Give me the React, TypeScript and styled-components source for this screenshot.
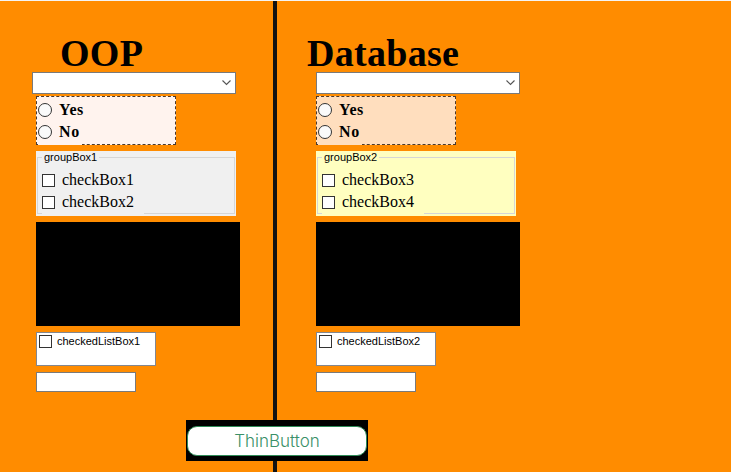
import React from "react";
import styled, { createGlobalStyle } from "styled-components";

const GlobalStyle = createGlobalStyle`
    html, body {
        margin: 0;
        padding: 0;
        background: #ff8c00;
    }
`;

type PanelProps = {
    title: string;
    inset: number;
    titleShift: number;
    comboShift: number;
    radioBg: string;
    groupBg: string;
    groupName: string;
    checks: string[];
    listName: string;
};

const panels: PanelProps[] = [
    {
        title: "OOP",
        inset: 36,
        titleShift: 24,
        comboShift: -4,
        radioBg: "#fff3ee",
        groupBg: "#f0f0f0",
        groupName: "groupBox1",
        checks: ["checkBox1", "checkBox2"],
        listName: "checkedListBox1",
    },
    {
        title: "Database",
        inset: 39,
        titleShift: -9,
        comboShift: 0,
        radioBg: "#ffdebe",
        groupBg: "#ffffc0",
        groupName: "groupBox2",
        checks: ["checkBox3", "checkBox4"],
        listName: "checkedListBox2",
    },
];

const Panel = (p: PanelProps) => {
    return (
        <SColumn $inset={p.inset}>
            <STitle $shift={p.titleShift}>{p.title}</STitle>
            <SCombo $shift={p.comboShift}>
                <svg width="9" height="6" viewBox="0 0 9 6">
                    <polyline
                        points="0.5,0.5 4.5,4.5 8.5,0.5"
                        fill="none"
                        stroke="#555"
                        strokeWidth="1.1"
                    />
                </svg>
            </SCombo>
            <SRadioPanel $bg={p.radioBg}>
                <SRadioRow $bg={p.radioBg}>
                    <SRadio />
                    Yes
                </SRadioRow>
                <SRadioRow $bg={p.radioBg} $cover>
                    <SRadio />
                    No
                </SRadioRow>
            </SRadioPanel>
            <SGroup $bg={p.groupBg}>
                <SFieldset>
                    <SLegend>{p.groupName}</SLegend>
                    {p.checks.map((c, i) => (
                        <SCheckRow key={c} $bg={p.groupBg} $cover={i === 1}>
                            <SCheck />
                            {c}
                        </SCheckRow>
                    ))}
                </SFieldset>
            </SGroup>
            <SScreen />
            <SListBox>
                <SListItem>
                    <SCheck />
                    {p.listName}
                </SListItem>
            </SListBox>
            <STextBox readOnly value="" />
        </SColumn>
    );
};

const App = () => {
    return (
        <>
            <GlobalStyle />
            <SRoot>
                <Panel {...panels[0]} />
                <SDivider />
                <Panel {...panels[1]} />
                <SThinButton>
                    <SThinFace>ThinButton</SThinFace>
                </SThinButton>
            </SRoot>
        </>
    );
};

const SRoot = styled.div`
    position: relative;
    width: 731px;
    height: 472px;
    box-sizing: border-box;
    border-top: 1px solid #f4f4f4;
    background: #ff8c00;
    display: grid;
    grid-template-columns: 273px 4px 1fr;
    overflow: hidden;
`;

const SDivider = styled.div`
    background: #121212;
`;

const SColumn = styled.div<{ $inset: number }>`
    display: flex;
    flex-direction: column;
    align-items: flex-start;
    padding-top: 33px;
    padding-left: ${(p) => p.$inset}px;
`;

const STitle = styled.div<{ $shift: number }>`
    margin-left: ${(p) => p.$shift}px;
    height: 38px;
    font: 700 38px/38px "Liberation Serif", serif;
    letter-spacing: 0.3px;
    color: #000;
    white-space: nowrap;
`;

const SCombo = styled.div<{ $shift: number }>`
    margin-left: ${(p) => p.$shift}px;
    width: 204px;
    height: 22px;
    box-sizing: border-box;
    border: 1px solid #7a7a7a;
    background: #fff;
    display: flex;
    justify-content: flex-end;
    align-items: center;
    padding-right: 4px;
`;

const SRadioPanel = styled.div<{ $bg: string }>`
    margin-top: 2px;
    width: 140px;
    height: 49px;
    box-sizing: border-box;
    border: 1px dashed #4a3a2e;
    background: ${(p) => p.$bg};
    display: flex;
    flex-direction: column;
    padding: 2px 0 1px 1px;
`;

const SRadioRow = styled.div<{ $bg: string; $cover?: boolean }>`
    position: relative;
    width: 44px;
    height: 22px;
    display: flex;
    align-items: center;
    gap: 7px;
    background: ${(p) => p.$bg};
    font: 700 16px "Liberation Serif", serif;
    letter-spacing: 0.6px;
    color: #000;
    white-space: nowrap;
    padding-bottom: ${(p) => (p.$cover ? 2 : 0)}px;
    margin-bottom: ${(p) => (p.$cover ? -2 : 0)}px;
`;

const SRadio = styled.span`
    width: 14px;
    height: 14px;
    box-sizing: border-box;
    border: 1px solid #333;
    border-radius: 50%;
    background: #fafafa;
    flex: none;
`;

const SGroup = styled.div<{ $bg: string }>`
    margin-top: 6px;
    width: 200px;
    height: 65px;
    box-sizing: border-box;
    padding: 0 1px 2px 1px;
    background: ${(p) => p.$bg};
`;

const SFieldset = styled.fieldset`
    margin: 0;
    min-width: 0;
    padding: 5px 0 0 4px;
    border: 1px solid #d6d6d6;
`;

const SLegend = styled.legend`
    padding: 0 2px;
    font: 11px/13px "Liberation Sans", sans-serif;
    color: #000;
`;

const SCheckRow = styled.div<{ $bg: string; $cover?: boolean }>`
    position: relative;
    width: 102px;
    height: 22px;
    display: flex;
    align-items: center;
    gap: 7px;
    background: ${(p) => p.$bg};
    font: 16px "Liberation Serif", serif;
    color: #000;
    white-space: nowrap;
    padding-bottom: ${(p) => (p.$cover ? 1 : 0)}px;
    margin-bottom: ${(p) => (p.$cover ? -1 : 0)}px;
`;

const SCheck = styled.span`
    width: 13px;
    height: 13px;
    box-sizing: border-box;
    border: 1px solid #333;
    background: #fff;
    flex: none;
`;

const SScreen = styled.div`
    margin-top: 6px;
    width: 204px;
    height: 104px;
    background: #000;
`;

const SListBox = styled.div`
    margin-top: 6px;
    width: 120px;
    height: 34px;
    box-sizing: border-box;
    border: 1px solid #828790;
    background: #fff;
    padding: 2px;
`;

const SListItem = styled.div`
    display: flex;
    align-items: center;
    gap: 5px;
    font: 11px/13px "Liberation Sans", sans-serif;
    color: #000;
    white-space: nowrap;
`;

const STextBox = styled.input`
    margin: 6px 0 0;
    width: 100px;
    height: 20px;
    box-sizing: border-box;
    border: 1px solid #7a7a7a;
    background: #fff;
    padding: 0;
    outline: none;
`;

const SThinButton = styled.div`
    position: absolute;
    left: 186px;
    top: 419px;
    width: 182px;
    height: 41px;
    box-sizing: border-box;
    padding: 6px 1px 5px;
    background: #000;
`;

const SThinFace = styled.div`
    height: 100%;
    box-sizing: border-box;
    border: 1px solid #2e8b57;
    border-radius: 10px;
    background: #fff;
    display: flex;
    align-items: center;
    justify-content: center;
    font: 300 17px "Inter", sans-serif;
    color: #3a9068;
`;

export default App;
